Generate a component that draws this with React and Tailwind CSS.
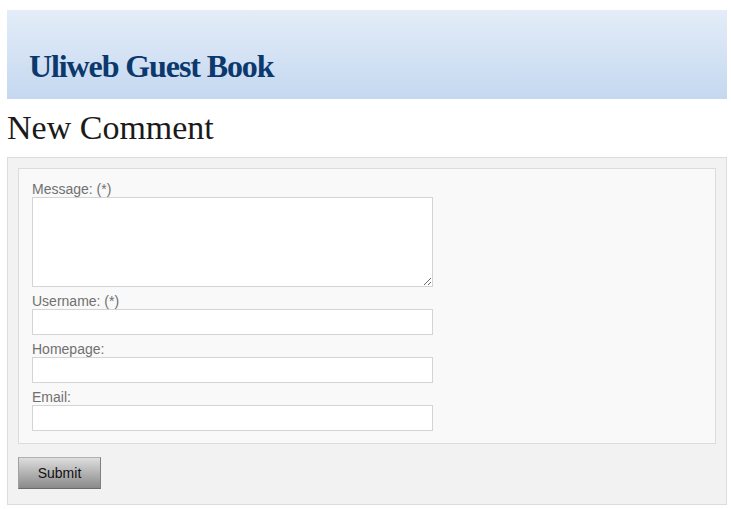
export default function App() {
    return (
        <div className="min-h-[509px] bg-white pl-[7px] pt-[10px] font-['Liberation_Sans',Arial,sans-serif]">
            <div className="w-[720px]">
                <header className="h-[89px] bg-gradient-to-b from-[#e4edf8] to-[#c4d8f0] pl-[22px] pt-[36px]">
                    <h1 className="font-['Liberation_Serif','Times_New_Roman',serif] text-[32px] font-bold leading-[40px] tracking-[-1.1px] text-[#0c396d]">
                        Uliweb Guest Book
                    </h1>
                </header>

                <h2 className="mt-[9px] font-['Liberation_Serif','Times_New_Roman',serif] text-[34px] leading-[40px] text-[#1a1a1a]">
                    New Comment
                </h2>

                <form className="mt-[9px] border border-[#dcdcdc] bg-[#f2f2f2] p-[10px] pb-[15px]" onSubmit={e => e.preventDefault()}>
                    <fieldset className="border border-[#dcdcdc] bg-[#f9f9f9] pl-[13px] pt-[12px] pb-[12px] text-[14px] text-[#707070]">
                        <label className="block h-[16px] leading-[16px]">Message: (*)</label>
                        <textarea className="block h-[90px] w-[401px] resize border border-[#d4d4d4] bg-white" />

                        <label className="mt-[6px] block h-[16px] leading-[16px]">Username: (*)</label>
                        <input type="text" className="block h-[26px] w-[401px] border border-[#d4d4d4] bg-white" />

                        <label className="mt-[6px] block h-[16px] leading-[16px]">Homepage:</label>
                        <input type="text" className="block h-[26px] w-[401px] border border-[#d4d4d4] bg-white" />

                        <label className="mt-[6px] block h-[16px] leading-[16px]">Email:</label>
                        <input type="text" className="block h-[26px] w-[401px] border border-[#d4d4d4] bg-white" />
                    </fieldset>

                    <button
                        type="submit"
                        className="mt-[13px] block h-[32px] w-[83px] border border-t-[#b0b0b0] border-l-[#a0a0a0] border-r-[#808080] border-b-[#6a6a6a] bg-gradient-to-b from-[#dedede] to-[#8a8a8a] text-[14px] text-[#111]"
                    >
                        Submit
                    </button>
                </form>
            </div>
        </div>
    )
}
